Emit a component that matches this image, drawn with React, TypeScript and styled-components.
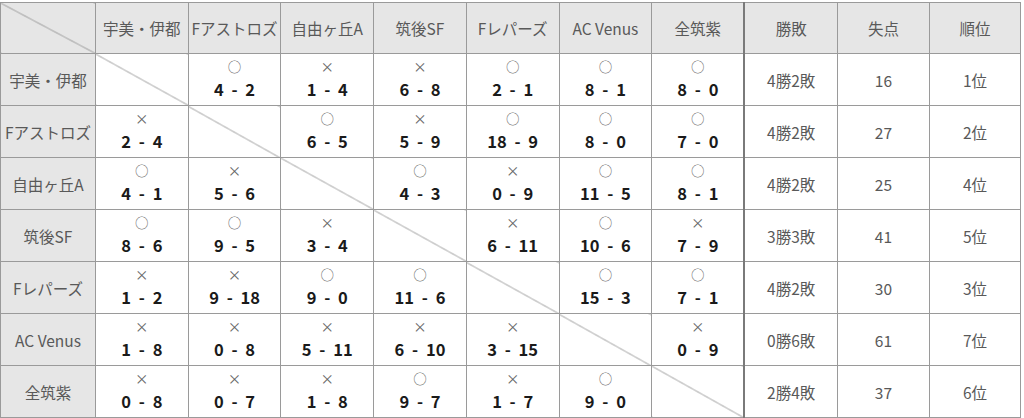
import React, { FC } from "react";
import styled, { createGlobalStyle, css } from "styled-components";

const GlobalStyle = createGlobalStyle`
  html, body {
    margin: 0;
    padding: 0;
    background: #fff;
  }
  body {
    font-family: "Noto Sans CJK JP", "Noto Sans", sans-serif;
  }
`;

const Wrap = styled.div`
  padding-top: 2px;
  width: 1024px;
`;

const Table = styled.table`
  border-collapse: collapse;
  table-layout: fixed;
  width: 1021px;
`;

const lineColor = "#9a9a9a";

// slash from the top-left corner to the bottom-right corner of a cell
const diagonal = css`
  background-image: linear-gradient(
    to top right,
    transparent calc(50% - 0.7px),
    #8a8a8a 50%,
    transparent calc(50% + 0.7px)
  );
`;

const HeadCell = styled.th<{ $sep?: boolean; $corner?: boolean }>`
  height: 50px;
  padding: 0;
  border: 1px solid ${lineColor};
  border-left: ${(p) => (p.$sep ? "2px solid #7a7a7a" : `1px solid ${lineColor}`)};
  background-color: #e6e6e6;
  color: #595959;
  font-weight: normal;
  font-size: 15.5px;
  text-align: center;
  vertical-align: middle;
  white-space: nowrap;
  ${(p) => p.$corner && diagonal}
`;

const NameCell = styled.td`
  height: 51px;
  padding: 0;
  border: 1px solid ${lineColor};
  background: #e6e6e6;
  color: #595959;
  font-size: 15.5px;
  text-align: center;
  vertical-align: middle;
  white-space: nowrap;
`;

const MatchCell = styled.td<{ $self?: boolean }>`
  padding: 0;
  border: 1px solid ${lineColor};
  background-color: #fff;
  vertical-align: top;
  ${(p) => p.$self && diagonal}
`;

const StatCell = styled.td<{ $sep?: boolean }>`
  padding: 0;
  border: 1px solid ${lineColor};
  border-left: ${(p) => (p.$sep ? "2px solid #7a7a7a" : `1px solid ${lineColor}`)};
  color: #595959;
  font-size: 15.5px;
  text-align: center;
  vertical-align: middle;
`;

const Result = styled.div`
  display: flex;
  flex-direction: column;
  align-items: center;
`;

const Mark = styled.span`
  margin-top: 3px;
  font-size: 13.5px;
  line-height: 18px;
  color: #666;
`;

const Score = styled.span`
  margin-top: 3px;
  font-size: 16.5px;
  line-height: 22px;
  font-weight: bold;
  color: #1a1a1a;
  word-spacing: 4px;
  white-space: pre;
`;

type Game = [string, number, number] | null;

interface Row {
  name: string;
  games: Game[];
  record: string;
  lost: number;
  rank: string;
}

const teams = ["宇美・伊都", "Fアストロズ", "自由ヶ丘A", "筑後SF", "Fレパーズ", "AC Venus", "全筑紫"];

const rows: Row[] = [
  { name: "宇美・伊都", games: [null, ["○", 4, 2], ["×", 1, 4], ["×", 6, 8], ["○", 2, 1], ["○", 8, 1], ["○", 8, 0]], record: "4勝2敗", lost: 16, rank: "1位" },
  { name: "Fアストロズ", games: [["×", 2, 4], null, ["○", 6, 5], ["×", 5, 9], ["○", 18, 9], ["○", 8, 0], ["○", 7, 0]], record: "4勝2敗", lost: 27, rank: "2位" },
  { name: "自由ヶ丘A", games: [["○", 4, 1], ["×", 5, 6], null, ["○", 4, 3], ["×", 0, 9], ["○", 11, 5], ["○", 8, 1]], record: "4勝2敗", lost: 25, rank: "4位" },
  { name: "筑後SF", games: [["○", 8, 6], ["○", 9, 5], ["×", 3, 4], null, ["×", 6, 11], ["○", 10, 6], ["×", 7, 9]], record: "3勝3敗", lost: 41, rank: "5位" },
  { name: "Fレパーズ", games: [["×", 1, 2], ["×", 9, 18], ["○", 9, 0], ["○", 11, 6], null, ["○", 15, 3], ["○", 7, 1]], record: "4勝2敗", lost: 30, rank: "3位" },
  { name: "AC Venus", games: [["×", 1, 8], ["×", 0, 8], ["×", 5, 11], ["×", 6, 10], ["×", 3, 15], null, ["×", 0, 9]], record: "0勝6敗", lost: 61, rank: "7位" },
  { name: "全筑紫", games: [["×", 0, 8], ["×", 0, 7], ["×", 1, 8], ["○", 9, 7], ["×", 1, 7], ["○", 9, 0], null], record: "2勝4敗", lost: 37, rank: "6位" },
];

const App: FC = () => {
  return (
    <Wrap>
      <GlobalStyle />
      <Table>
        <colgroup>
          <col style={{ width: 95 }} />
          {teams.map((t) => (
            <col key={t} style={{ width: 92.7 }} />
          ))}
          <col style={{ width: 93 }} />
          <col style={{ width: 92 }} />
          <col style={{ width: 91 }} />
        </colgroup>
        <thead>
          <tr>
            <HeadCell $corner />
            {teams.map((t) => (
              <HeadCell key={t}>{t}</HeadCell>
            ))}
            <HeadCell $sep>勝敗</HeadCell>
            <HeadCell>失点</HeadCell>
            <HeadCell>順位</HeadCell>
          </tr>
        </thead>
        <tbody>
          {rows.map((r) => (
            <tr key={r.name}>
              <NameCell>{r.name}</NameCell>
              {r.games.map((g, i) =>
                g ? (
                  <MatchCell key={i}>
                    <Result>
                      <Mark>{g[0]}</Mark>
                      <Score>{`${g[1]} - ${g[2]}`}</Score>
                    </Result>
                  </MatchCell>
                ) : (
                  <MatchCell key={i} $self />
                )
              )}
              <StatCell $sep>{r.record}</StatCell>
              <StatCell>{r.lost}</StatCell>
              <StatCell>{r.rank}</StatCell>
            </tr>
          ))}
        </tbody>
      </Table>
    </Wrap>
  );
};

export default App;
